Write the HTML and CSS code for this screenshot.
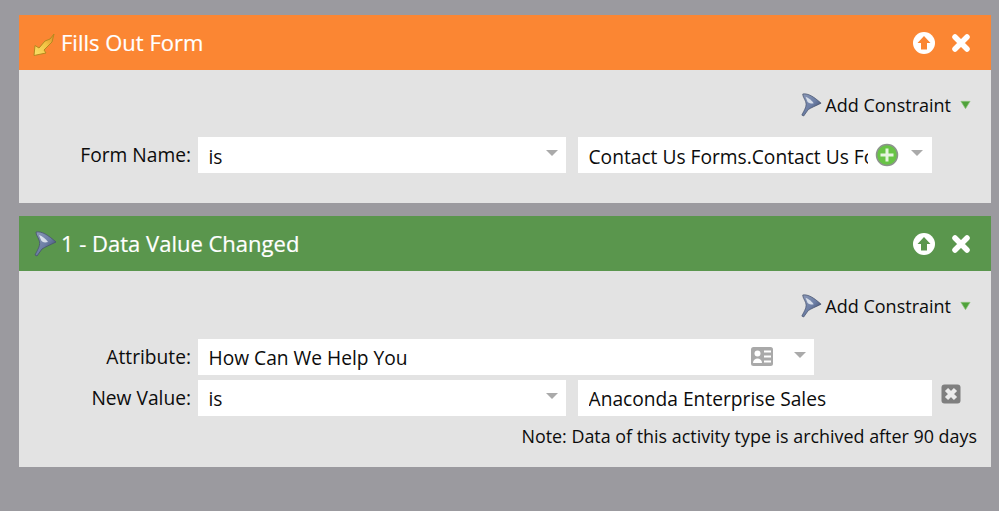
FILE: index.html
```html
<!DOCTYPE html>
<html lang="en">
<head>
<meta charset="utf-8">
<title>Smart list</title>
<link rel="stylesheet" href="styles.css">
</head>
<body>
<section class="card">
  <header class="head orange">
    <svg class="head-icon" width="26" height="26" viewBox="0 0 26 26">
      <defs><linearGradient id="bolt" x1="0" y1="1" x2="1" y2="0"><stop offset="0" stop-color="#f8e26a"/><stop offset=".55" stop-color="#f3c444"/><stop offset="1" stop-color="#d88a26"/></linearGradient></defs>
      <path d="M2 25.500 L3 15.500 L7 18 L13 11 L18 9 L22 4 L20 12 L16 16 L12 20 L14 23 Z" fill="url(#bolt)" stroke="#b5891f" stroke-width="1"/>
    </svg>
    <h2 class="title">Fills Out Form</h2>
    <svg class="act" width="24" height="24" viewBox="0 0 24 24"><use href="#up"/></svg>
    <svg class="act" width="24" height="24" viewBox="0 0 24 24"><use href="#close"/></svg>
  </header>
  <div class="body body-a">
    <div class="constraint">
      <svg class="funnel" width="22" height="24" viewBox="0 0 24 26"><use href="#funnel"/></svg>
      <span>Add Constraint</span>
      <svg class="tri" width="11" height="10" viewBox="0 0 12 10"><path d="M1 1 H11 L6 9 Z" fill="#4fa23a" stroke="#8cc47c" stroke-width=".8"/></svg>
    </div>
    <div class="row">
      <label class="lbl">Form Name:</label>
      <div class="field w-is"><span class="val">is</span><i class="caret"></i></div>
      <div class="field w-val"><span class="val clip">Contact Us Forms.Contact Us Form</span>
        <svg class="plus" width="24" height="24" viewBox="0 0 24 24"><circle cx="12" cy="12" r="10.500" fill="#68c446" stroke="#8b948b" stroke-width="1.500"/><path d="M12 5.500 V18.500 M5.500 12 H18.500" stroke="#e6f5df" stroke-width="3"/></svg>
        <i class="caret"></i></div>
    </div>
  </div>
</section>
<section class="card">
  <header class="head green">
    <svg class="head-icon" width="26" height="26" viewBox="0 0 24 26"><use href="#funnel"/></svg>
    <h2 class="title">1 - Data Value Changed</h2>
    <svg class="act" width="24" height="24" viewBox="0 0 24 24"><use href="#up"/></svg>
    <svg class="act" width="24" height="24" viewBox="0 0 24 24"><use href="#close"/></svg>
  </header>
  <div class="body body-b">
    <div class="constraint">
      <svg class="funnel" width="22" height="24" viewBox="0 0 24 26"><use href="#funnel"/></svg>
      <span>Add Constraint</span>
      <svg class="tri" width="11" height="10" viewBox="0 0 12 10"><path d="M1 1 H11 L6 9 Z" fill="#4fa23a" stroke="#8cc47c" stroke-width=".8"/></svg>
    </div>
    <div class="row row-attr">
      <label class="lbl">Attribute:</label>
      <div class="field w-attr"><span class="val">How Can We Help You</span>
        <svg class="card-ico" width="22" height="19" viewBox="0 0 22 19"><rect x="0" y="0" width="22" height="19" rx="2.500" fill="#a9a9a9"/><circle cx="6.500" cy="6.500" r="3" fill="#fff"/><path d="M2 16 C2 10 11 10 11 16 Z" fill="#fff"/><path d="M13 4.500 H20 M13 9.500 H20 M13 14.500 H20" stroke="#fff" stroke-width="2"/></svg>
        <i class="caret"></i></div>
    </div>
    <div class="row">
      <label class="lbl">New Value:</label>
      <div class="field w-is"><span class="val">is</span><i class="caret"></i></div>
      <div class="field w-val"><span class="val">Anaconda Enterprise Sales</span></div>
      <svg class="del" width="20" height="20" viewBox="0 0 20 20"><rect x=".5" y=".5" width="19" height="19" rx="3" fill="#7f7f7f"/><path d="M5.500 5.500 L14.500 14.500 M14.500 5.500 L5.500 14.500" stroke="#ececec" stroke-width="4.500"/></svg>
    </div>
    <p class="note">Note: Data of this activity type is archived after 90 days</p>
  </div>
</section>
<svg class="defs" width="0" height="0">
  <defs>
    <linearGradient id="fun" x1="0" y1="0" x2="1" y2="1"><stop offset="0" stop-color="#8d9ab8"/><stop offset=".5" stop-color="#6d7fa6"/><stop offset="1" stop-color="#2c3a58"/></linearGradient>
    <g id="funnel">
      <path d="M3 1 C9 0 15 4 23 11 C17 14 12 16 9 18 L4 25 L2 24 C5 18 8 14 6 9 C5 6 3 4 3 1 Z" fill="url(#fun)" stroke="#47536e" stroke-width=".8"/>
      <path d="M6 4 C9 5 13 8 15 11 C11 12 9 11 8 9 Z" fill="#e9eef6" opacity=".85"/>
    </g>
    <g id="up">
      <circle cx="12" cy="12" r="11" fill="#fff"/>
      <path d="M12 5 L18.500 12 H15 V18.500 H9 V12 H5.500 Z" fill="currentColor"/>
    </g>
    <g id="close">
      <path d="M6 6 L18 18 M18 6 L6 18" stroke="#fff" stroke-width="5.500" stroke-linecap="round"/>
    </g>
  </defs>
</svg>
</body>
</html>
```
FILE: styles.css
```css
* { box-sizing: border-box; }
html, body { margin: 0; height: 511px; overflow: hidden; }
body {
  background: #9b9a9f;
  padding: 15px 8px 0 19px;
  font-family: "Open Sans", "Noto Sans", sans-serif;
  font-size: 19.2px;
  color: #0c0c0c;
}
.card { margin-bottom: 13px; }
.head {
  height: 55px;
  display: flex;
  align-items: center;
  padding: 0 18px 0 13px;
  color: #fff;
}
.orange { background: #fb8633; color: #fb8633; }
.green { background: #5a964d; color: #5a964d; }
.head-icon { flex: none; margin-right: 3px; }
.title {
  margin: -2px auto 0 0;
  font-size: 22px;
  font-weight: 400;
  color: #fff;
  -webkit-text-stroke: .2px #fff;
}
.act { margin-left: 13px; flex: none; }
.body { background: #e3e3e3; padding: 0 14px 0 0; }
.body-a { height: 133px; padding-top: 22px; }
.body-b { height: 196px; padding-top: 22px; }
.constraint {
  height: 26px;
  display: flex;
  justify-content: flex-end;
  align-items: center;
  padding-right: 6px;
  margin-bottom: 20px;
  font-size: 18px;
}
.body-a .constraint { margin-bottom: 19px; }
.funnel { margin-right: 3px; }
.tri { margin-left: 9px; }
.row { display: flex; align-items: center; height: 36px; }
.row-attr { margin-bottom: 5px; }
.lbl { width: 172px; text-align: right; flex: none; margin: -2px 7px 0 0; }
.field {
  background: #fff;
  height: 36px;
  display: flex;
  align-items: center;
  padding: 0 8px 0 10.500px;
  flex: none;
}
.body-a .field { padding-top: 2px; }
.w-is { width: 368px; margin-right: 12px; }
.w-val { width: 354px; }
.w-attr { width: 616px; }
.val { flex: 1; white-space: nowrap; overflow: hidden; }
.clip { flex: none; width: 279px; }
.caret {
  width: 0; height: 0;
  border-left: 6px solid transparent;
  border-right: 6px solid transparent;
  border-top: 6px solid #aaa;
  flex: none;
  margin-top: -4px;
}
.body-a .caret { margin-top: -6px; }
.plus { flex: none; margin: -2px 12px 0 7px; }
.card-ico { flex: none; margin-right: 21px; margin-top: -2px; }
.del { flex: none; margin-left: 9px; margin-top: -8px; }
.note { margin: 8px 0 0; text-align: right; font-size: 17.900px; }
.defs { position: absolute; }
```
